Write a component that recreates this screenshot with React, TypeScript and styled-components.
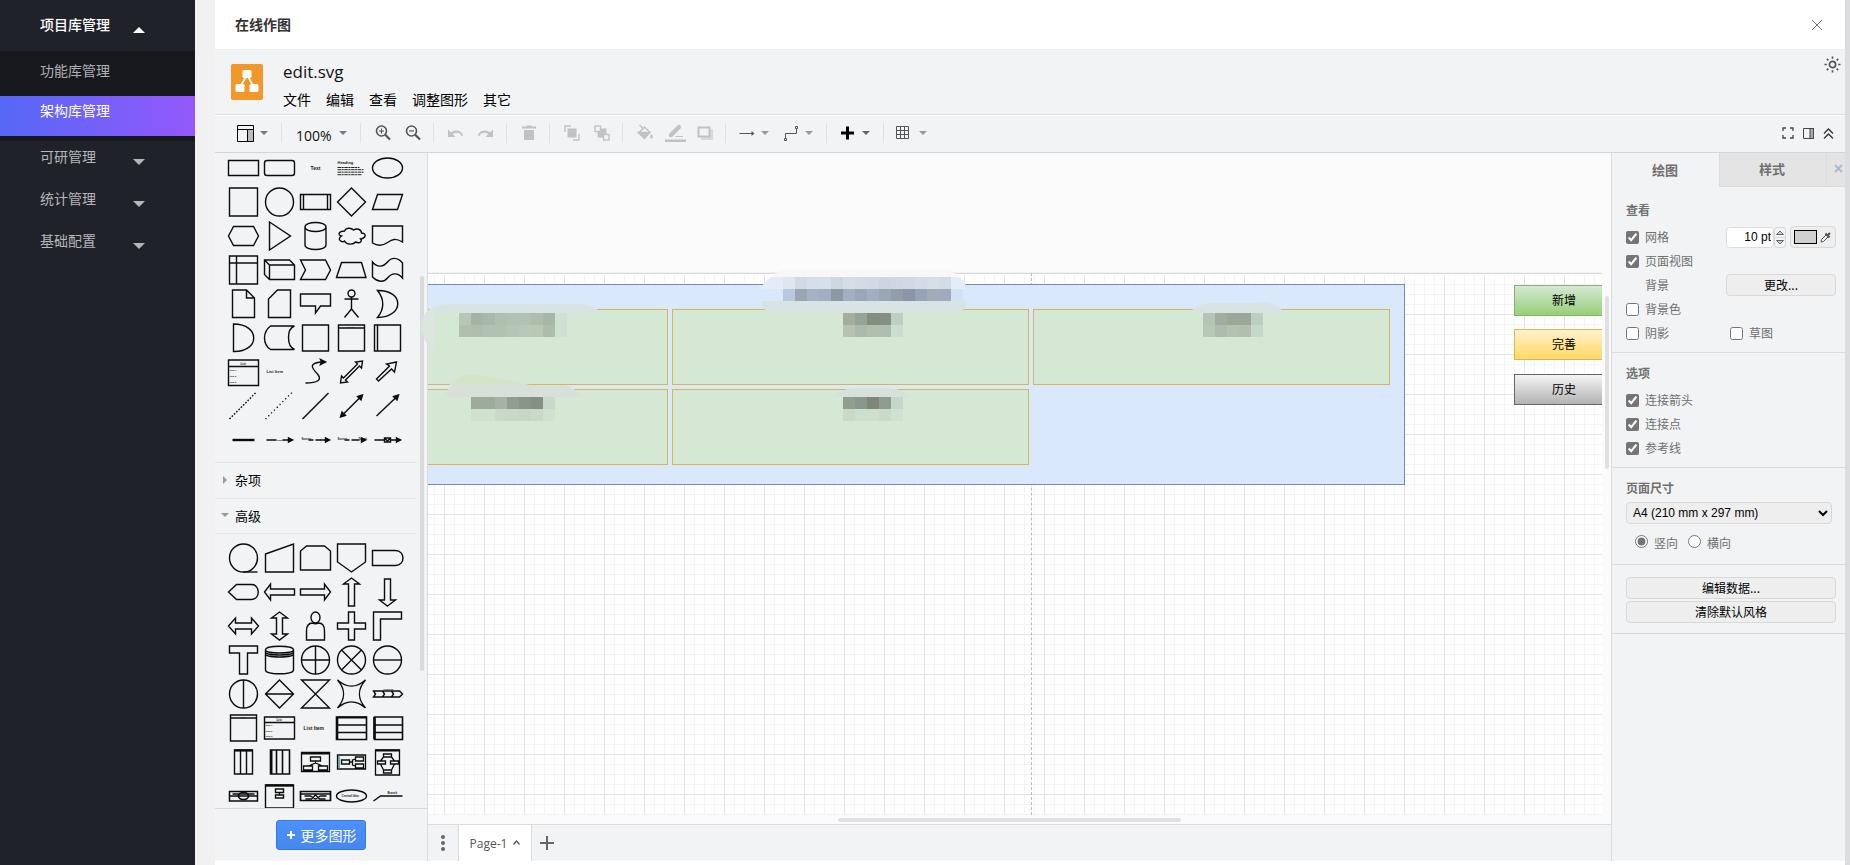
import React from "react";
import styled, { createGlobalStyle, css } from "styled-components";

const cjk = `"Noto Sans CJK SC", sans-serif`;

const GlobalStyle = createGlobalStyle`
  * { box-sizing: border-box; }
  body { margin: 0; background: #f1f1f1; font-family: "Open Sans", ${cjk}; }
  button, input, select { font: inherit; margin: 0; }
  button { cursor: pointer; }
`;

/* ---------- application frame ---------- */

const Frame = styled.div`
  display: flex;
  height: 100vh;
  min-height: 640px;
`;

const Nav = styled.nav`
  flex: 0 0 195px;
  background: #20222a;
  font: 14px ${cjk};
`;

const NavHead = styled.a<{ $open?: boolean }>`
  display: flex;
  justify-content: space-between;
  height: ${(p) => (p.$open ? 51 : 42)}px;
  padding: ${(p) => (p.$open ? 9 : 0)}px 50px 0 40px;
  line-height: 30px;
  color: ${(p) => (p.$open ? "#fff" : "#b5b6b8")};
  font-weight: ${(p) => (p.$open ? 500 : 400)};
  text-decoration: none;
  svg { margin-top: 18px; }
`;

const SubMenu = styled.div`
  padding-bottom: 5px;
  background: #17181d;
`;

const SubItem = styled.a<{ $active?: boolean }>`
  display: block;
  padding-left: 40px;
  text-decoration: none;
  height: 45px;
  line-height: 38px;
  color: #b0b1b3;
  ${(p) =>
    p.$active &&
    css`
      height: 40px;
      line-height: 28px;
      color: #fff;
      background: linear-gradient(90deg, #5568f6, #9558fb);
    `}
`;

const Dialog = styled.main`
  flex: 1;
  min-width: 0;
  display: flex;
  flex-direction: column;
  margin-left: 20px;
  padding-bottom: 4px;
  background: #fff;
`;

const Edge = styled.div`
  flex: 0 0 5px;
  background: #dcdde1;
`;

const DialogHead = styled.header`
  display: flex;
  align-items: center;
  justify-content: space-between;
  flex: 0 0 50px;
  padding: 0 20px;
  border-bottom: 1px solid #eee;
`;

const DialogTitle = styled.h1`
  margin: 0;
  padding-bottom: 2px;
  font: 700 14px ${cjk};
  color: #333;
`;

const PlainButton = styled.button`
  display: flex;
  align-items: center;
  justify-content: center;
  padding: 0;
  border: 0;
  background: none;
  color: #555;
`;

/* ---------- title and menus ---------- */

const TitleBar = styled.div`
  flex: 0 0 66px;
  display: flex;
  padding: 14px 4px 0 16px;
  background: #f1f3f4;
  border-bottom: 1px solid #fff;
  box-shadow: inset 0 -1px #dadce0;
`;

const TitleText = styled.div`
  flex: 1;
  margin-left: 20px;
`;

const FileName = styled.div`
  height: 24px;
  margin-top: -4px;
  font: 17px/24px "Open Sans", sans-serif;
  color: #111;
`;

const Menus = styled.div`
  display: flex;
  gap: 15px;
  margin-top: 5px;
  button { font: 14px/20px ${cjk}; color: #000; }
`;

const ThemeButton = styled(PlainButton)`
  width: 17px;
  height: 17px;
  margin-top: -8px;
`;

/* ---------- toolbar ---------- */

const Toolbar = styled.div`
  flex: 0 0 37px;
  display: flex;
  align-items: center;
  padding: 0 11px 2px 17px;
  background: #f1f3f4;
  border-bottom: 1px solid #d3d5d8;
`;

const Tool = styled(PlainButton)`
  flex: 0 0 30px;
  height: 24px;
`;

const DropTool = styled(PlainButton)<{ $wide?: boolean }>`
  flex: 0 0 ${(p) => (p.$wide ? 66 : 44)}px;
  height: 24px;
  padding: 0 8px 0 4px;
  justify-content: space-between;
  font: 14px/20px "Open Sans", sans-serif;
  ${(p) => p.$wide && css`padding-left: 7px; color: #111; span { padding-top: 5px; }`}
`;

const Separator = styled.div`
  width: 1px;
  height: 20px;
  margin: 0 7px 0 5px;
  background: #e0e1e3;
`;

const ToolbarEnd = styled.div`
  display: flex;
  gap: 9px;
  margin-left: auto;
`;

/* ---------- work area ---------- */

const Work = styled.div`
  flex: 1;
  min-height: 0;
  display: flex;
`;

const Shapes = styled.aside`
  flex: 0 0 213px;
  display: flex;
  flex-direction: column;
  background: #f1f3f4;
  border-right: 1px solid #dadce0;
`;

const ShapeScroll = styled.div`
  position: relative;
  flex: 1;
  min-height: 0;
  overflow: hidden;
`;

const ScrollThumb = styled.div`
  position: absolute;
  top: 123px;
  right: 3px;
  width: 4px;
  height: 395px;
  border-radius: 2px;
  background: #d8dadc;
`;

const ShapeGrid = styled.div<{ $first?: boolean }>`
  display: grid;
  grid-template-columns: repeat(5, 36px);
  grid-auto-rows: 34px;
  padding: ${(p) => (p.$first ? "0 0 5px" : "7px 0")};
  margin: ${(p) => (p.$first ? "-2px" : "0")} 10px 0;
`;

const SectionHead = styled.button`
  display: flex;
  align-items: center;
  gap: 6px;
  width: 202px;
  height: 36px;
  padding: 0 6px 2px;
  border: 0;
  border-top: 1px solid #e2e4e6;
  background: none;
  font: 13px ${cjk};
  color: #000;
  svg { flex: 0 0 8px; }
  &[aria-expanded="true"] { border-bottom: 1px solid #e2e4e6; }
`;

const ShapeFooter = styled.div`
  flex: 0 0 53px;
  display: flex;
  justify-content: center;
  align-items: flex-start;
  padding-top: 11px;
  border-top: 1px solid #d5d7da;
`;

const MoreButton = styled.button`
  display: flex;
  align-items: center;
  justify-content: center;
  gap: 5px;
  width: 90px;
  height: 30px;
  padding: 0;
  border: 1px solid #3079ed;
  border-radius: 3px;
  background: linear-gradient(#4d90fe, #4787ed);
  color: #fff;
  font: 14px ${cjk};
`;

/* ---------- canvas ---------- */

const Center = styled.section`
  flex: 1;
  min-width: 0;
  display: flex;
  flex-direction: column;
`;

const Stage = styled.div`
  position: relative;
  flex: 1;
  min-height: 0;
  background: #fbfbfb;
`;

const Clip = styled.div`
  position: absolute;
  inset: 0 9px 9px 0;
  overflow: hidden;
`;

const Sheet = styled.div`
  height: 100%;
  margin-top: 120px;
  border-top: 1px solid #dcdcdc;
  background: #fff;
  box-shadow: 0 -1px #f0f0f0;
`;

const GridLines = styled.div`
  height: 100%;
  background-image: linear-gradient(#e3e3e3 1px, transparent 1px),
    linear-gradient(90deg, #e3e3e3 1px, transparent 1px),
    linear-gradient(#f4f4f4 1px, transparent 1px),
    linear-gradient(90deg, #f4f4f4 1px, transparent 1px);
  background-size: 40px 40px, 40px 40px, 10px 10px, 10px 10px;
  background-position: 16px 40px, 16px 40px, 6px 0, 6px 0;
  clip-path: inset(1px 0 0 0);
`;

const PageBreak = styled.div`
  position: absolute;
  left: 603px;
  top: 120px;
  bottom: 0;
  border-left: 1px dashed #bbb;
`;

const Node = styled.div<{ $x: number; $y: number; $w: number; $h: number; $fill: string; $line: string }>`
  position: absolute;
  left: ${(p) => p.$x}px;
  top: ${(p) => p.$y}px;
  width: ${(p) => p.$w}px;
  height: ${(p) => p.$h}px;
  display: flex;
  align-items: center;
  justify-content: center;
  padding-bottom: 2px;
  border: 1px solid ${(p) => p.$line};
  background: ${(p) => p.$fill};
  font: 12px ${cjk};
  color: #000;
`;

const Mosaic = styled.svg`
  position: absolute;
  left: 0;
  top: 0;
  width: 100%;
  height: 100%;
  overflow: visible;
  pointer-events: none;
  z-index: 1;
`;

const StageThumb = styled.div<{ $vertical?: boolean }>`
  position: absolute;
  border-radius: 2px;
  background: #e0e0e0;
  ${(p) =>
    p.$vertical
      ? css`top: 143px; right: 2px; width: 4px; height: 173px;`
      : css`left: 410px; bottom: 2px; width: 343px; height: 4px;`}
`;

const PageTabs = styled.div`
  flex: 0 0 37px;
  display: flex;
  border-top: 1px solid #dadce0;
  background: #f1f3f4;
`;

const PageMenu = styled(PlainButton)`
  width: 30px;
`;

const PageTab = styled(PlainButton)`
  gap: 6px;
  width: 74px;
  border: solid #dadce0;
  border-width: 0 1px;
  background: #fff;
  font: 12px "Open Sans", sans-serif;
  color: #555;
`;

/* ---------- format panel ---------- */

const Panel = styled.aside`
  flex: 0 0 234px;
  border-left: 1px solid #dadce0;
  background: #f1f3f4;
  font: 12px "Liberation Sans", ${cjk};
  color: #707070;
`;

const PanelTabs = styled.div`
  display: flex;
  height: 34px;
`;

const PanelTab = styled.button<{ $active?: boolean }>`
  flex: 0 0 107px;
  padding: 0 1px 1px 0;
  border: 0;
  background: none;
  font: 700 13px ${cjk};
  color: #707070;
  ${(p) =>
    !p.$active &&
    css`
      padding: 0 2px 2px 0;
      background: #e4e4e4;
      border: solid #dadce0;
      border-width: 0 0 1px 1px;
    `}
`;

const PanelClose = styled(PanelTab)`
  flex: 1;
  display: flex;
  align-items: center;
  justify-content: center;
  padding: 0 0 3px 5px;
  color: #a9bad2;
`;

const Section = styled.div<{ $top?: number; $bottom: number }>`
  padding: ${(p) => p.$top ?? 11}px 9px ${(p) => p.$bottom}px 14px;
  border-bottom: 1px solid #dadce0;
`;

const SectionTitle = styled.h2`
  height: 18px;
  margin: 0 0 6px;
  font: 700 12px/18px ${cjk};
`;

const Row = styled.div`
  display: flex;
  align-items: center;
  height: 24px;
`;

const Check = styled.label<{ $indent?: boolean }>`
  display: flex;
  align-items: center;
  gap: 6px;
  width: ${(p) => (p.$indent ? 81 : 104)}px;
  font: 12px/18px ${cjk};
  input { width: 13px; height: 13px; accent-color: #757575; }
`;

const Value = styled.span`
  width: 100px;
  padding-left: 19px;
  font: 12px/18px ${cjk};
`;

const FieldGroup = styled.div`
  display: flex;
  align-items: center;
  margin-left: auto;
`;

const SizeInput = styled.input`
  width: 48px;
  height: 21px;
  padding: 0 2px;
  border: 1px solid #dadce0;
  border-radius: 4px;
  text-align: right;
  color: #000;
`;

const Stepper = styled.div`
  display: flex;
  flex-direction: column;
  width: 12px;
  height: 21px;
  margin-right: 4px;
  border: 1px solid #d8d8d8;
  border-radius: 3px;
  button { flex: 1; }
  button + button { border-top: 1px solid #d8d8d8; }
`;

const ColorButton = styled.button`
  display: flex;
  align-items: center;
  gap: 3px;
  width: 46px;
  height: 22px;
  padding: 0 3px;
  border: 1px solid #d8d8d8;
  border-radius: 4px;
  background: #eee;
`;

const Swatch = styled.span`
  width: 23px;
  height: 14px;
  border: 1px solid #000;
  background: #d0d0d0;
`;

const PanelButton = styled.button<{ $small?: boolean }>`
  display: block;
  width: ${(p) => (p.$small ? "110px" : "100%")};
  height: 22px;
  padding: 0;
  border: 1px solid #d8d8d8;
  border-radius: 4px;
  background: #eee;
  color: #000;
  font: 12px/18px ${cjk};
  & + & { margin-top: 2px; }
`;

const PaperSelect = styled.select`
  display: block;
  width: 206px;
  height: 22px;
  margin-top: -1px;
  padding: 0 2px;
  border: 1px solid #d8d8d8;
  border-radius: 4px;
  background: #eee;
  color: #000;
`;

const Radios = styled.div`
  display: flex;
  gap: 10px;
  margin: 9px 0 0 9px;
  label { display: flex; align-items: flex-start; gap: 6px; font: 12px/20px ${cjk}; }
  input { width: 13px; height: 13px; margin-top: 2px; accent-color: #757575; }
`;

/* ---------- small drawings ---------- */

const Caret = ({ up, color = "#7a7a7a", w = 8 }: { up?: boolean; color?: string; w?: number }) => (
  <svg width={w} height={w / 2} viewBox="0 0 8 4">
    <path d={up ? "M0 4L4 0L8 4Z" : "M0 0H8L4 4Z"} fill={color} />
  </svg>
);

const Icon = ({ children, size = 18, color = "#555", sw = 1 }: { children: React.ReactNode; size?: number; color?: string; sw?: number }) => (
  <svg width={size} height={size} viewBox="0 0 18 18" fill="none" stroke={color} strokeWidth={sw}>
    {children}
  </svg>
);

const pale = "#c0c2c4";

const Logo = () => (
  <svg width="32" height="36" viewBox="0 0 32 36">
    <rect width="32" height="36" rx="2" fill="#f29729" />
    <path d="M16 11L9 23M16 11L23 23" stroke="#fff" strokeWidth="1.6" />
    <rect x="11.500" y="6" width="9" height="8" rx="1.500" fill="#fff" />
    <rect x="4.500" y="20" width="9" height="8" rx="1.500" fill="#fff" />
    <rect x="18.500" y="20" width="9" height="8" rx="1.500" fill="#fff" />
  </svg>
);

const LayoutIcon = () => (
  <Icon color="#000">
    <rect x="12" y="5" width="5" height="12" fill="#bbb" stroke="none" />
    <path d="M1.500 1.500H17.500V17.500H1.500ZM1.500 5.500H17.500M11.500 5.500V17.500" />
  </Icon>
);

const ZoomIcon = ({ plus }: { plus?: boolean }) => (
  <Icon color="#555" sw={1.6}>
    <circle cx="7.500" cy="7" r="5" />
    <path d="M11.200 10.700L16 15.500" strokeWidth="2.200" />
    <path d={plus ? "M5 7H10M7.500 4.500V9.500" : "M5 7H10"} strokeWidth="1.100" />
  </Icon>
);

const UndoIcon = ({ flip }: { flip?: boolean }) => (
  <Icon>
    <g fill={pale} stroke="none" transform={flip ? "matrix(-1 0 0 1 17 0)" : undefined}>
      <path d="M1 5.500V13H8.500L5.800 10.300C9 7.700 13 8.600 14.500 12L16.200 11.400C14.500 6.500 8.500 5 4.100 8.600Z" />
    </g>
  </Icon>
);

const TrashIcon = () => (
  <Icon>
    <path d="M2 2.500H6.500V1.500H11.500V2.500H16V4.500H2ZM4 6H14V16H4Z" fill={pale} stroke="none" />
  </Icon>
);

const FrontIcon = () => (
  <Icon color={pale} sw={1.4}>
    <path d="M2 8V2H8M10 16H16V10" />
    <rect x="4.500" y="4.500" width="9" height="9" fill={pale} stroke="none" />
  </Icon>
);

const BackIcon = () => (
  <Icon color={pale} sw={1.4}>
    <path d="M4.500 4.500H13.500V13.500H4.500Z" fill={pale} stroke="none" />
    <rect x="2" y="2" width="5.500" height="5.500" fill="#f1f3f4" />
    <rect x="10.500" y="10.500" width="5.500" height="5.500" fill="#f1f3f4" />
  </Icon>
);

const FillIcon = () => (
  <Icon color={pale} sw={1.3}>
    <path d="M3.500 1L8 5.500M3 8.500L8.500 3L14 8.500" />
    <path d="M2 8.500H14L8.500 14.500Z" fill={pale} />
    <path d="M15.500 10C14 12 13.500 14.500 15.500 14.500S17 12 15.500 10Z" fill={pale} stroke="none" />
  </Icon>
);

const PenIcon = () => (
  <svg width="21" height="18" viewBox="0 0 21 18" fill={pale}>
    <path d="M4 13V10L12.500 1.500Q14 0 15.500 1.500Q17 3 15.500 4.500L7 13Z" />
    <path d="M0 15.500H21V18H0ZM11 12H18V13H10Z" />
  </svg>
);

const ShadowIcon = () => (
  <Icon>
    <rect x="5" y="5" width="12" height="11" fill="#d9dadc" stroke="none" />
    <rect x="2.500" y="3.500" width="11" height="9" fill="#f1f3f4" stroke={pale} strokeWidth="2" />
  </Icon>
);

/* ---------- shape library ---------- */

const Thumb = styled.svg`
  width: 36px;
  height: 34px;
  fill: none;
  stroke: #0c0c0c;
  stroke-width: 1.4;
  text { fill: #222; stroke: none; font-family: "Liberation Sans", sans-serif; font-weight: 700; }
`;

const P = ({ d, w, dash }: { d: string; w?: number; dash?: string }) => (
  <path d={d} strokeWidth={w} strokeDasharray={dash} />
);
const F = ({ d }: { d: string }) => <path d={d} fill="#111" />;
const T = ({ x, y, s, children }: { x: number; y: number; s: number; children: string }) => (
  <text x={x} y={y} fontSize={s}>{children}</text>
);

const general: [string, React.ReactNode][] = [
  ["矩形", <P d="M-15-7.500H15V7.500H-15Z" />],
  ["圆角矩形", <rect x="-15" y="-7.500" width="30" height="15" rx="2.500" />],
  ["文本", <T x={-5} y={1.5} s={5}>Text</T>],
  ["标题", <><T x={-14} y={-4} s={4}>Heading</T><P w={0.9} d="M-14-.5H8M-14 1.700H12M-14 4.200H12M-14 6.700H10" dash="3.500 .5 2.200 .6" /></>],
  ["椭圆", <ellipse rx="15" ry="10" />],
  ["正方形", <P d="M-14-14H14V14H-14Z" />],
  ["圆", <circle r="14" />],
  ["流程", <P d="M-15-7.500H15V7.500H-15ZM-12-7.500V7.500M12-7.500V7.500" />],
  ["菱形", <P d="M0-14L14 0L0 14L-14 0Z" />],
  ["平行四边形", <P d="M-15 7.500L-10-7.500H15L10 7.500Z" />],
  ["六边形", <P d="M-15 0L-10-9.500H10L15 0L10 9.500H-10Z" />],
  ["三角形", <P d="M-10-14L11 0L-10 14Z" />],
  ["圆柱", <P d="M-10.500-9C-10.500-15 10.500-15 10.500-9V9C10.500 15-10.500 15-10.500 9ZM-10.500-9C-10.500-3 10.500-3 10.500-9" />],
  ["云", <P d="M-7-5C-13-5-14-1-10 0C-15 3-10 7-7 5C-5 9 2 9 4 6C9 8 11 5 9 3C15 2 15-3 10-3C10-7 5-8 2-6C-1-9-6-8-7-5Z" />],
  ["文档", <P d="M-15-10H15V6C8 2 5 3 0 6.500C-5 10-10 10-15 7Z" />],
  ["内部存储", <P d="M-14-14H14V14H-14ZM-7-14V14M-14-7H14" />],
  ["立方体", <P d="M-15-10H10L15-5V9.500H-10L-15 4.500ZM-15-10L-10-5H15M-10-5V9.500" />],
  ["步骤", <P d="M-15-10H10L15 0L10 9.500H-15L-10 0Z" />],
  ["梯形", <P d="M-15 7.500L-10-7.500H10L14.500 7.500Z" />],
  ["条带", <P d="M-15-8C-10-2-4-3 0-8C4-13 10-13 15-7V8C10 2 4 3 0 8C-4 13-10 12-15 7Z" />],
  ["便签", <P d="M-11-14H3L11-6V13.500H-11ZM3-14V-6H11" />],
  ["卡片", <P d="M-2-14H11V13.500H-11V-5Z" />],
  ["标注", <P d="M-15-10H15V2H5L0 9V2H-15Z" />],
  ["参与者", <><circle cy="-10.500" r="3.500" /><P d="M0-7V5M-7-5H7M0 5L-7 13.500M0 5L7 13.500" /></>],
  ["或", <P d="M-10-13.500C17-14 17 13 -10 13.500C-3 5-3-5-10-13.500Z" />],
  ["与", <P d="M-10-14C17-14 17 14-10 13.500Z" />],
  ["数据存储", <P d="M-9-12H15C7-9 7 8 15 11.500H-9C-17 6-17-6-9-12Z" />],
  ["容器", <P d="M-13-13H13V13H-13Z" />],
  ["标题容器", <><P d="M-13-13H13V13H-13ZM-13-10H13" /><T x={-6} y={-10.5} s={2.5}>Vertical</T></>],
  ["横向容器", <P d="M-13-13H13V13H-13ZM-10-13V13" />],
  ["列表", <><P d="M-15-12H15V13.500H-15ZM-15-5.500H15" /><T x={-3} y={-7.5} s={3}>List</T><T x={-14} y={-1.500} s={2.4}>Item 1</T><T x={-14} y={4.500} s={2.4}>Item 2</T><T x={-14} y={10.500} s={2.4}>Item 3</T></>],
  ["列表项", <T x={-13} y={1} s={4}>List Item</T>],
  ["曲线", <><P d="M-10 11C2 11 7 8 2 2C-5-5-6-9 6-10" /><F d="M10-10L5-12.500L6-10L5-7.500Z" /></>],
  ["双向箭头", <P d="M-11 11L-10 4L-8 6L6-8L4-10L11-11L10-4L8-6L-6 8L-4 10Z" />],
  ["箭头", <P d="M-11 7L2-6L-1-8L9-10L7 0L4-3L-9 9Z" />],
  ["虚线", <P dash="1.600 1.600" d="M-14 13L13-14" />],
  ["点线", <P dash="1.200 2.800" d="M-14 13L13-14" />],
  ["线", <P d="M-13 13L13-13" />],
  ["双向连接线", <><P d="M-9 9L9-9" /><F d="M-11 11L-9.500 6L-6 9.500ZM11-11L6-9.500L9.500-6Z" /></>],
  ["定向连接线", <><P d="M-11 10L9-9" /><F d="M11-11L6-9.500L9.500-6Z" /></>],
  ["链接", <P w={2.4} d="M-11 0H11" />],
  ["带标签连接线", <><P d="M-13 0H-3M3 0H10" /><T x={-3} y={.5} s={2.5}>Label</T><F d="M13 0L9-2V2Z" /></>],
  ["双标签连接线", <><P d="M-7 0H-2M0 0H11" /><T x={-14} y={0} s={2.8}>Source</T><F d="M14 0L10-2V2Z" /></>],
  ["三标签连接线", <><P d="M-7 0H-2M0 0H8" /><T x={-14} y={0} s={2.8}>Source</T><T x={7} y={0} s={2.8}>Target</T><F d="M14 0L10-2V2Z" /></>],
  ["带符号连接线", <><P d="M-13 0H-3M3 0H10M-3-2H3V2H-3ZM-3-2L0 1L3-2" /><F d="M13 0L9-2V2Z" /></>],
];

const advanced: [string, React.ReactNode][] = [
  ["磁带数据", <><circle r="14" /><P d="M0 14H14" /></>],
  ["手动输入", <P d="M-14-4L14-14V14H-14Z" />],
  ["循环限制", <P d="M-9-12H9L15-7V12H-15V-7Z" />],
  ["跨页引用", <P d="M-14-14H14V4L0 14L-14 4Z" />],
  ["延迟", <P d="M-15-7.500H8C18-7.500 18 7.500 8 7.500H-15Z" />],
  ["显示", <P d="M-15 0L-7-7.500H8C17-7.500 17 7.500 8 7.500H-7Z" />],
  ["左箭头", <P d="M-15 0L-9-8V-3H15V3H-9V8Z" />],
  ["右箭头", <P d="M15 0L9-8V-3H-15V3H9V8Z" />],
  ["上箭头", <P d="M0-14L8-8H3V14H-3V-8H-8Z" />],
  ["下箭头", <P d="M0 14L8 8H3V-13H-3V8H-8Z" />],
  ["左右箭头", <P d="M-15 0L-8-8V-3H8V-8L15 0L8 8V3H-8V8Z" />],
  ["上下箭头", <P d="M0-14L8-8H3V8H8L0 14L-8 8H-3V-8H-8Z" />],
  ["用户", <><ellipse cy="-8.500" rx="4.500" ry="5.500" /><P d="M-9 14V5C-9-1-6-3-3-3C-1-2 1-2 3-3C6-3 9-1 9 5V14Z" /></>],
  ["十字", <P d="M-3-14H3V-3H14V3H3V14H-3V3H-14V-3H-3Z" />],
  ["角", <P d="M-14-14H14V-7H-7V14H-14Z" />],
  ["T形", <P d="M-14-14H14V-7H4V14H-4V-7H-14Z" />],
  ["数据存储器", <P d="M-14-10C-14-15 14-15 14-10V10C14 15-14 15-14 10ZM-14-10C-14-6 14-6 14-10M-14-8C-14-4 14-4 14-8M-14-6C-14-2 14-2 14-6" />],
  ["或运算", <><circle r="14" /><P d="M0-14V14M-14 0H14" /></>],
  ["求和", <><circle r="14" /><P d="M-10-10L10 10M10-10L-10 10" /></>],
  ["水平分割圆", <><circle r="14" /><P d="M-14 0H14" /></>],
  ["垂直分割圆", <><circle r="14" /><P d="M0-14V14" /></>],
  ["排序", <P d="M0-14L14 0L0 14L-14 0ZM-14 0H14" />],
  ["整理", <P d="M-14-14H14L-14 14H14Z" />],
  ["开关", <P d="M-14-14C-5-6 5-6 14-14C6-5 6 5 14 14C5 6-5 6-14 14C-6 5-6-5-14-14Z" />],
  ["流程步骤", <><P w={1.4} d="M-14-3H12L15 0L12 3H-14L-12 0ZM-5-3L-3 0L-5 3M4-3L6 0L4 3" /><T x={-4} y={-4} s={2.5}>Process</T></>],
  ["泳道容器", <><P d="M-13-13H13V13H-13ZM-13-10H13" /><T x={-4} y={-10.500} s={2.5}>Label</T></>],
  ["清单", <><P d="M-15-11H15V11H-15ZM-15-5.500H15" /><T x={-3} y={-7} s={3}>List</T><T x={-14} y={-2} s={2.4}>Item 1</T><T x={-14} y={4} s={2.4}>Item 2</T><T x={-14} y={9} s={2.4}>Item 3</T></>],
  ["清单项", <T x={-12} y={1.500} s={5}>List Item</T>],
  ["水平泳池", <><P w={1.6} d="M-15-11H15V11.500H-15ZM-15-3H15M-15 4.500H15M-14-11V11" /><P w={2} d="M-15-10.500H15" /></>],
  ["水平泳池二", <><P w={1.6} d="M-13-11H15V11.500H-13ZM-13-3H15M-13 4.500H15" /><P w={2.6} d="M-13-11V11" /></>],
  ["垂直泳池", <><P d="M-9-12H9V12H-9ZM-3-12V12M3-12V12" /><P w={2.2} d="M-9-11.500H9" /></>],
  ["垂直泳池二", <><P w={1.6} d="M-9-12H10V12H-9ZM-3-12V12M3-12V12" /><P w={2} d="M-8-12V12" /></>],
  ["组织结构", <><P w={1.3} d="M-14-9.500H14V9.500H-14ZM-5-5H5V-1H-5ZM0-1V1M-7 4L0 1L7 4M-12 4H-3V8H-12ZM3 4H12V8H3Z" /><P w={2} d="M-14-8.500H14" /></>],
  ["横向树", <><P w={1.3} d="M-14-7H14V7H-14ZM-10-2H-2V2H-10ZM4-5H12V-1H4ZM4 2H12V6H4ZM-2 0H1M4-3L1-2V3L4 4" /><path d="M-12.500-6.500V6.500" stroke="#388" /></>],
  ["环状图", <><P w={1.3} d="M-12-12H12V13H-12ZM-4-8H4V-5H-4ZM-10-1H-2V2H-10ZM3-1H11V2H3ZM-4 8H4V11H-4ZM-4-5L-7-1M4-5L7-1M-7 2L-4 8M7 2L4 8" /><P w={2} d="M-12-11.500H12" /></>],
  ["径向图", <><P w={1.5} d="M-14-4.500H14V5H-14ZM-14 0H14M-11-2H11" /><ellipse rx="5" ry="3.500" strokeWidth="1.600" /></>],
  ["层级容器", <><P d="M-14-11H14V12H-14ZM-4-7H4V-3.500H-4ZM0-3V-1M-4-1H4V2H-4Z" /><P w={2.4} d="M-14-10.500H14" /></>],
  ["链路容器", <><P w={1.700} d="M-15-4.500H15V4.500H-15Z" /><P w={1.300} d="M-15-2H15M-11 0H-5L0 3L5 0H11M-10 3H-4L0-1L4 3H10" /></>],
  ["中心想法", <><ellipse rx="15" ry="6" /><T x={-10} y={1} s={3}>Central Idea</T></>],
  ["分支", <><P d="M-14 5L-7 0H15" /><T x={0} y={-2} s={2.8}>Branch</T></>],
];

const Library = ({ items, first }: { items: [string, React.ReactNode][]; first?: boolean }) => (
  <ShapeGrid $first={first}>
    {items.map(([name, art]) => (
      <PlainButton key={name} aria-label={name}>
        <Thumb viewBox="-18.5 -17 36 34">{art}</Thumb>
      </PlainButton>
    ))}
  </ShapeGrid>
);

/* ---------- masked labels on the diagram ---------- */

const masks: [number, number, string][] = [
  [783, 277, "dfe6f2 d2d9e4 d6dee9 d7dfea cdd6e1 d6dde8 d4dbe6 d3dae4 ced5de d0d7e0 d3d9e3 d5dce8 d7deea d3dbe7"],
  [783, 289, "b9c8dd 9ba5b3 a6b1c5 a3aec2 8b98a6 a2afc1 9ca6ba a3aebf 9aa6b6 929dae 8b94a8 98a3b5 a2acb8 9faabf d3e1f5"],
  [459, 313, "b7c7b5 a4b3a5 a9b9a9 afbfb2 b2c2b1 b1c2b5 aebcac a7b6a9 cfe1d0"],
  [459, 325, "b0bfae b0beae b1c2b5 b2c1b0 b5c5b8 b9c9b8 b9c7b5 aebcac cfe1d0"],
  [843, 313, "a4ae9b 94a498 848e7d 858f84 bcd0c1"],
  [843, 325, "b5c4b2 aabaad b0bfae aebeb1 cbdecd"],
  [1203, 313, "b5c4b3 a0ada0 9ca79a 9ca79a bacfc0"],
  [1203, 325, "b9c8b6 adbcb0 b3c2b1 b1bfaf c4d9cb"],
  [471, 397, "9eaa9a 9daa9d a5b3a7 929c91 8a9488 859084 c5d9cc"],
  [471, 409, "cfe1cf cfe1cf c9dac8 c8d9c7 c6d7c5 c9dac8 cfe1cf"],
  [843, 397, "929d8d 87988c 7f8578 8f9b90 c3d7ca"],
  [843, 409, "c9dac8 cddfcd cddfcd c9dac8 cfe2d1"],
];

const MaskedLabels = () => (
  <Mosaic>
    <g transform="translate(-428 -153)">
      <path d="M771 277Q778 269 792 269H940Q952 269 959 277Z" fill="#f7f7f7" />
      <path d="M761 289Q764 281 771 277H959Q965 281 967 289Z" fill="#e4ecf7" />
      <path d="M761 301H967Q964 313 958 313H771Q764 313 761 301Z" fill="#d8e3e4" />
      <path d="M425 313Q436 304 450 304H580Q593 305 602 313Z" fill="#d8e3e4" />
      <path d="M435 306Q421 312 421 328Q422 342 435 350Z" fill="#dde6de" />
      <path d="M449 385Q456 375 470 375Q490 375 530 385Z" fill="#d5e3c9" />
      <path d="M444 397Q447 389 452 385H565Q577 389 583 397Z" fill="#d7e1d9" />
      <path d="M832 397Q843 388 855 388H890Q903 389 909 397Z" fill="#d7e1d9" />
      <path d="M1189 313Q1199 303 1212 303H1255Q1272 299 1285 313Z" fill="#d8e3e4" />
      {masks.flatMap(([x, y, row]) =>
        row.split(" ").map((c, i) => (
          <rect key={`${x}-${y}-${i}`} x={x + i * 12} y={y} width="12" height="12" fill={`#${c}`} />
        ))
      )}
    </g>
  </Mosaic>
);

const stations = [
  [-117, 156],
  [244, 156],
  [605, 156],
  [-117, 236],
  [244, 236],
];

const legend = [
  { label: "新增", y: 132, fill: "linear-gradient(#d5e8d4, #97d077)", line: "#82b366" },
  { label: "完善", y: 176, fill: "linear-gradient(#fff2cc, #ffd966)", line: "#d6b656" },
  { label: "历史", y: 221, fill: "linear-gradient(#f5f5f5, #b3b3b3)", line: "#666666" },
];

export default function App() {
  return (
    <Frame>
      <GlobalStyle />
      <Nav>
        <NavHead href="#projects" $open>项目库管理<Caret up color="#fff" w={12} /></NavHead>
        <SubMenu>
          <SubItem href="#functions">功能库管理</SubItem>
          <SubItem href="#architecture" $active>架构库管理</SubItem>
        </SubMenu>
        {["可研管理", "统计管理", "基础配置"].map((name) => (
          <NavHead key={name} href="#group">{name}<Caret color="#b5b6b8" w={12} /></NavHead>
        ))}
      </Nav>

      <Dialog>
        <DialogHead>
          <DialogTitle>在线作图</DialogTitle>
          <PlainButton aria-label="关闭">
            <svg width="16" height="12" viewBox="0 0 16 12" stroke="#777" fill="none"><path d="M3 1L13 11M13 1L3 11" /></svg>
          </PlainButton>
        </DialogHead>

        <TitleBar>
          <Logo />
          <TitleText>
            <FileName>edit.svg</FileName>
            <Menus>
              {["文件", "编辑", "查看", "调整图形", "其它"].map((m) => <PlainButton key={m}>{m}</PlainButton>)}
            </Menus>
          </TitleText>
          <ThemeButton aria-label="外观">
            <Icon size={17} sw={1.8}>
              <circle cx="9" cy="9" r="3.300" />
              <path d="M9 .5V3M9 15V17.500M.5 9H3M15 9H17.500M3 3L4.600 4.600M13.400 13.400L15 15M3 15L4.600 13.400M13.400 4.600L15 3" />
            </Icon>
          </ThemeButton>
        </TitleBar>

        <Toolbar>
          <DropTool aria-label="视图"><LayoutIcon /><Caret /></DropTool>
          <Separator />
          <DropTool $wide aria-label="缩放"><span>100%</span><Caret /></DropTool>
          <Separator />
          <Tool aria-label="放大"><ZoomIcon plus /></Tool>
          <Tool aria-label="缩小"><ZoomIcon /></Tool>
          <Separator />
          <Tool aria-label="撤销"><UndoIcon /></Tool>
          <Tool aria-label="重做"><UndoIcon flip /></Tool>
          <Separator />
          <Tool aria-label="删除"><TrashIcon /></Tool>
          <Separator />
          <Tool aria-label="移至最前"><FrontIcon /></Tool>
          <Tool aria-label="移至最后"><BackIcon /></Tool>
          <Separator />
          <Tool aria-label="填充颜色"><FillIcon /></Tool>
          <Tool aria-label="线条颜色"><PenIcon /></Tool>
          <Tool aria-label="阴影"><ShadowIcon /></Tool>
          <Separator />
          <DropTool aria-label="连接">
            <Icon><path d="M2.500 9.500H16" /><path d="M17.500 9.500L14.500 7V12Z" fill="#555" stroke="none" /></Icon>
            <Caret color="#9a9a9a" />
          </DropTool>
          <DropTool aria-label="航点">
            <Icon><path d="M4.500 14V9.500H15.500V5M3.500 14.500H5.500V16.500H3.500ZM14.500 2.500H16.500V4.500H14.500Z" /></Icon>
            <Caret color="#9a9a9a" />
          </DropTool>
          <Separator />
          <DropTool aria-label="插入"><Icon color="#000" sw={3}><path d="M9.500 2.500V15.500M3 9H16" /></Icon><Caret color="#666" /></DropTool>
          <Separator />
          <DropTool aria-label="表格">
            <Icon><path d="M1.500 2.500H13.500V14.500H1.500ZM1.500 6.500H13.500M1.500 10.500H13.500M5.500 2.500V14.500M9.500 2.500V14.500" /></Icon>
            <Caret color="#9a9a9a" />
          </DropTool>
          <ToolbarEnd>
            <PlainButton aria-label="全屏">
              <svg width="12" height="12" viewBox="0 0 12 12" fill="none" stroke="#444" strokeWidth="1.300"><path d="M1 4V1H4M8 1H11V4M11 8V11H8M4 11H1V8" /></svg>
            </PlainButton>
            <PlainButton aria-label="格式面板">
              <svg width="11" height="11" viewBox="0 0 11 11" fill="none" stroke="#444"><path d="M7 .5H10.500V10.500H7Z" fill="#aaa" /><path d="M.5 .5H10.500V10.500H.5Z" /></svg>
            </PlainButton>
            <PlainButton aria-label="收起">
              <svg width="11" height="11" viewBox="0 0 11 11" fill="none" stroke="#333" strokeWidth="1.300"><path d="M1 5.500L5.500 1L10 5.500M1 10.500L5.500 6L10 10.500" /></svg>
            </PlainButton>
          </ToolbarEnd>
        </Toolbar>

        <Work>
          <Shapes>
            <ShapeScroll>
              <Library items={general} first />
              <SectionHead aria-expanded="false">
                <svg width="8" height="8" viewBox="0 0 8 8"><path d="M2 0L6 4L2 8Z" fill="#999" /></svg>杂项
              </SectionHead>
              <SectionHead aria-expanded="true"><Caret color="#999" />高级</SectionHead>
              <Library items={advanced} />
              <ScrollThumb />
            </ShapeScroll>
            <ShapeFooter>
              <MoreButton>
                <svg width="10" height="10" viewBox="0 0 10 10" stroke="#fff" strokeWidth="2"><path d="M5 1V9M1 5H9" /></svg>更多图形
              </MoreButton>
            </ShapeFooter>
          </Shapes>

          <Center>
            <Stage>
              <Clip>
                <Sheet><GridLines /></Sheet>
                <PageBreak />
                <Node $x={-131} $y={131} $w={1108} $h={201} $fill="#dae8fc" $line="#6c8ebf" />
                {stations.map(([x, y]) => (
                  <Node key={`${x}-${y}`} $x={x} $y={y} $w={357} $h={76} $fill="#d5e8d4" $line="#d6b656" />
                ))}
                {legend.map((n) => (
                  <Node key={n.label} $x={1086} $y={n.y} $w={100} $h={31} $fill={n.fill} $line={n.line}>{n.label}</Node>
                ))}
              </Clip>
              <MaskedLabels />
              <StageThumb $vertical />
              <StageThumb />
            </Stage>
            <PageTabs>
              <PageMenu aria-label="页面">
                <svg width="4" height="18" viewBox="0 0 4 18" fill="#666"><circle cx="2" cy="3" r="2" /><circle cx="2" cy="9" r="2" /><circle cx="2" cy="15" r="2" /></svg>
              </PageMenu>
              <PageTab>
                Page-1
                <svg width="7" height="7" viewBox="0 0 7 7" fill="none" stroke="#555" strokeWidth="1.300"><path d="M.5 4.500L3.500 1L6.500 4.500" /></svg>
              </PageTab>
              <PageMenu aria-label="插入页面">
                <svg width="14" height="14" viewBox="0 0 14 14" stroke="#666" strokeWidth="2"><path d="M7 0V14M0 7H14" /></svg>
              </PageMenu>
            </PageTabs>
          </Center>

          <Panel>
            <PanelTabs>
              <PanelTab $active>绘图</PanelTab>
              <PanelTab>样式</PanelTab>
              <PanelClose aria-label="隐藏">
                <svg width="9" height="9" viewBox="0 0 9 9" stroke="#a9bad2" strokeWidth="2"><path d="M1 1L8 8M8 1L1 8" /></svg>
              </PanelClose>
            </PanelTabs>
            <Section $top={14} $bottom={7}>
              <SectionTitle>查看</SectionTitle>
              <Row>
                <Check $indent><input type="checkbox" defaultChecked />网格</Check>
                <FieldGroup>
                  <SizeInput aria-label="网格大小" defaultValue="10 pt" />
                  <Stepper>
                    <PlainButton aria-label="增加"><svg width="8" height="5" viewBox="0 0 8 5" fill="#ccc" stroke="#666"><path d="M.5 4.500L4 1L7.500 4.500Z" /></svg></PlainButton>
                    <PlainButton aria-label="减少"><svg width="8" height="5" viewBox="0 0 8 5" fill="#ccc" stroke="#666"><path d="M.5 .5L4 4L7.500 .5Z" /></svg></PlainButton>
                  </Stepper>
                  <ColorButton aria-label="网格颜色">
                    <Swatch />
                    <svg width="12" height="12" viewBox="0 0 12 12" fill="none" stroke="#555"><path d="M1 11L1.500 8.500L6.500 3.500L8.500 5.500L3.500 10.500Z" /><path d="M5.500 2.500L9.500 6.500M8 4L10 2" strokeWidth="2" /></svg>
                  </ColorButton>
                </FieldGroup>
              </Row>
              <Row><Check><input type="checkbox" defaultChecked />页面视图</Check></Row>
              <Row><Value>背景</Value><PanelButton $small>更改...</PanelButton></Row>
              <Row><Check><input type="checkbox" />背景色</Check></Row>
              <Row>
                <Check><input type="checkbox" />阴影</Check>
                <Check><input type="checkbox" />草图</Check>
              </Row>
            </Section>
            <Section $bottom={7}>
              <SectionTitle>选项</SectionTitle>
              {["连接箭头", "连接点", "参考线"].map((o) => (
                <Row key={o}><Check><input type="checkbox" defaultChecked />{o}</Check></Row>
              ))}
            </Section>
            <Section $bottom={11}>
              <SectionTitle>页面尺寸</SectionTitle>
              <PaperSelect aria-label="页面尺寸"><option>A4 (210 mm x 297 mm)</option></PaperSelect>
              <Radios>
                <label><input type="radio" name="orientation" defaultChecked />竖向</label>
                <label><input type="radio" name="orientation" />横向</label>
              </Radios>
            </Section>
            <Section $top={12} $bottom={10}>
              <PanelButton>编辑数据...</PanelButton>
              <PanelButton>清除默认风格</PanelButton>
            </Section>
          </Panel>
        </Work>
      </Dialog>
      <Edge />
    </Frame>
  );
}
